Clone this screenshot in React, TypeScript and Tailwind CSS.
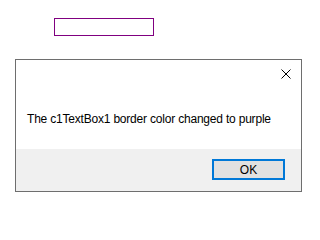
import React from 'react';

export default function App() {
  return (
    <div className="w-[314px] h-[204px] bg-white pt-[18px] font-['Segoe_UI','Liberation_Sans',sans-serif] text-[12px] text-black">
      {/* purple bordered textbox */}
      <div className="ml-[54px] w-[100px] h-[18px] border border-[#800080] bg-white" />

      {/* message box */}
      <div className="ml-[15px] mt-[23px] w-[287px] h-[133px] border border-[#6e6e6e] bg-white flex flex-col">
        <div className="h-[89px] flex flex-col">
          <div className="flex justify-end pt-[9px] pr-[10px]">
            <svg width="10" height="10" viewBox="0 0 10 10" className="block">
              <path d="M0.5 0.5 L9.5 9.5 M9.5 0.5 L0.5 9.5" stroke="#000" strokeWidth="1" fill="none" />
            </svg>
          </div>
          <div className="pl-[11px] mt-[32px] leading-[16px] tracking-[-0.2px]">The c1TextBox1 border color changed to purple</div>
        </div>
        <div className="flex-1 bg-[#f0f0f0] flex justify-end items-start pt-[10px] pr-[16px]">
          <button className="w-[73px] h-[21px] border-2 border-[#0078d7] bg-[#e1e1e1] text-[12px] leading-none flex items-center justify-center">
            OK
          </button>
        </div>
      </div>
    </div>
  );
}
